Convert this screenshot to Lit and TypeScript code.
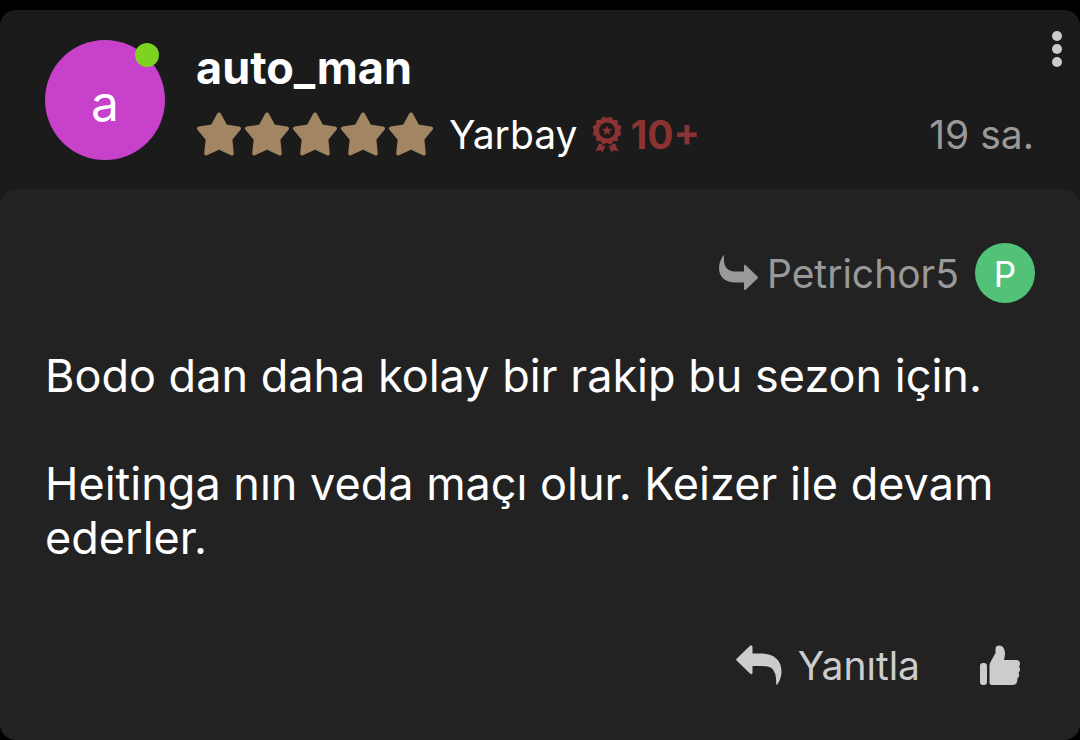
import { LitElement, html, css } from "lit";
import { customElement, property } from "lit/decorators.js";

@customElement("user-avatar")
class UserAvatar extends LitElement {
  @property() letter = "";
  @property({ type: Boolean }) online = false;

  static styles = css`
    :host {
      display: flex;
      position: relative;
      flex: none;
      align-items: center;
      justify-content: center;
      box-sizing: border-box;
      border-radius: 50%;
      color: #fff;
    }
    .dot {
      position: absolute;
      top: 3px;
      right: 6px;
      width: 24px;
      height: 24px;
      border-radius: 50%;
      background: #7ed321;
    }
  `;

  render() {
    return html`<span>${this.letter}</span>${this.online ? html`<span class="dot"></span>` : ""}`;
  }
}

@customElement("app-root")
class AppRoot extends LitElement {
  static styles = css`
    :host {
      display: block;
      box-sizing: border-box;
      min-height: 100vh;
      padding-top: 10px;
      background: #000;
      color: #fff;
      font-family: Inter, "Liberation Sans", sans-serif;
      font-size: 39px;
      line-height: 54px;
    }
    svg {
      display: block;
      flex: none;
      fill: currentColor;
    }
    button {
      padding: 0;
      border: 0;
      background: none;
      color: #ccc;
      font: inherit;
      cursor: pointer;
    }
    a {
      color: inherit;
      text-decoration: none;
    }
    .post {
      border-radius: 16px;
      overflow: hidden;
      background: #1b1b1b;
    }
    .head {
      display: flex;
      padding: 20px 0 27px 45px;
    }
    .big {
      width: 120px;
      height: 120px;
      margin-top: 10px;
      padding-top: 6px;
      background: #c741cb;
      font-size: 50px;
    }
    .who {
      display: flex;
      flex: 1;
      flex-direction: column;
      gap: 11px;
      min-width: 0;
      padding: 11px 0 0 31px;
    }
    .name {
      margin: 0;
      font-size: 45px;
      font-weight: 700;
    }
    .rank,
    .stars,
    .award {
      display: flex;
      align-items: center;
    }
    .rank {
      gap: 15px;
    }
    .stars {
      gap: 2px;
      color: #a38564;
    }
    .award {
      gap: 8px;
      color: #8b3232;
      font-weight: 700;
    }
    .label {
      padding-top: 2px;
    }
    .meta {
      display: flex;
      flex-direction: column;
      align-items: flex-end;
      justify-content: space-between;
    }
    .menu {
      margin-right: 18px;
    }
    .time {
      padding-right: 46px;
      color: #999;
    }
    .body {
      padding: 54px 45px 45px;
      border-radius: 16px;
      background: #222;
    }
    .target {
      display: flex;
      align-items: center;
      justify-content: flex-end;
      gap: 8px;
      color: #999;
    }
    .small {
      width: 60px;
      height: 60px;
      margin-left: 8px;
      padding-top: 2px;
      background: #52c278;
      font-size: 35px;
    }
    .text {
      margin: 46px 0 70px;
      font-size: 45px;
    }
    .text p {
      margin: 0 0 54px;
    }
    .text p:last-child {
      margin: 0;
    }
    .actions {
      display: flex;
      justify-content: flex-end;
      gap: 60px;
      padding-right: 15px;
    }
    .action {
      display: flex;
      align-items: center;
      gap: 16px;
      height: 60px;
    }
  `;

  private star() {
    return html`<svg width="46" height="44" viewBox="0 0 46 44" aria-hidden="true">
      <path
        d="M23 2.500 29.500 14.500 43 16.500 34.300 27 35.800 41.500 23 35.500 10.200 41.500 11.700 27 3 16.500 16.500 14.500Z"
        stroke="currentColor" stroke-width="4" stroke-linejoin="round" />
    </svg>`;
  }

  private ribbon() {
    return html`<svg width="30" height="37" viewBox="0 0 30 37" aria-hidden="true">
      <path
        fill-rule="evenodd"
        d="M15 2 19 .5 21.5 4 25.5 4 26 8.500 29.500 10.500 28 14.500 29.500 18.500 26 20.500 25.500 25 21.500 25 19 28.500 15 27 11 28.500 8.500 25 4.500 25 4 20.500 .5 18.500 2 14.500 .5 10.500 4 8.500 4.500 4 8.500 4 11 .5ZM15 6.500a8 8 0 1 0 0 16 8 8 0 0 0 0-16Z" />
      <path d="M15 9.500 16.400 12.700 20 13 17.300 15.400 18.100 19 15 17.100 11.900 19 12.700 15.400 10 13 13.600 12.700Z" />
      <path d="M7 27.500 10 28 11 30.500 13.500 29.500 10.500 36.500 8.500 34 3.500 35.500ZM23 27.500 20 28 19 30.500 16.500 29.500 19.500 36.500 21.500 34 26.500 35.500Z" />
    </svg>`;
  }

  render() {
    return html`
      <article class="post">
        <header class="head">
          <user-avatar class="big" letter="a" online></user-avatar>
          <div class="who">
            <h1 class="name"><a href="#auto_man">auto_man</a></h1>
            <div class="rank">
              <span class="stars">${[1, 2, 3, 4, 5].map(() => this.star())}</span>
              <span class="label">Yarbay</span>
              <span class="award">${this.ribbon()}<span class="label">10+</span></span>
            </div>
          </div>
          <div class="meta">
            <button class="menu" aria-label="Menü">
              <svg width="10" height="38" viewBox="0 0 10 38">
                <circle cx="5" cy="6" r="5" />
                <circle cx="5" cy="19" r="5" />
                <circle cx="5" cy="32" r="5" />
              </svg>
            </button>
            <time class="time">19 sa.</time>
          </div>
        </header>
        <section class="body">
          <div class="target">
            <svg width="40" height="36" viewBox="0 0 40 36" aria-hidden="true">
              <path d="M5 .5C4.500 9 6 16.500 17 16.500H25V11Q25 9 27 10.500L38.500 21.500Q39.500 22.500 38.500 23.500L27 34.500Q25 36 25 34V27.500H17C6 27.500 0 22 0 13 0 8 2 4 4.200 .5Q5 0 5 .5Z" />
            </svg>
            <a class="label" href="#Petrichor5">Petrichor5</a>
            <user-avatar class="small" letter="P"></user-avatar>
          </div>
          <div class="text">
            <p>Bodo dan daha kolay bir rakip bu sezon için.</p>
            <p>Heitinga nın veda maçı olur. Keizer ile devam ederler.</p>
          </div>
          <footer class="actions">
            <button class="action">
              <svg width="46" height="40" viewBox="0 0 46 40" aria-hidden="true">
                <path d="M14 .8Q16.500-1 16.500 2V8.500H24C38 8.500 45.500 15 45.500 27 45.500 32 43.500 36 41.500 39.200Q40.500 40.500 40.200 39 40.500 27 35.500 23 32 21 24 21H16.500V27.500Q16.500 30.500 14 28.600L.8 15.800Q-.3 14.700 .8 13.600Z" />
              </svg>
              <span class="label">Yanıtla</span>
            </button>
            <button class="action" aria-label="Beğen">
              <svg width="40" height="40" viewBox="0 0 40 40">
                <rect y="18" width="7" height="22" rx="3" />
                <path d="M12 40Q9.500 40 9.500 37.500V21Q9.500 18.500 11 16L15.500 8V4C15.500 1.500 17 .5 19 .5 23.500 .5 25 5 25 8.500 25 11 24.300 13 24 15H36C38.500 15 40 16.500 40 18.500Q40 20.500 39 21.500 40 23 40 24.800 40 26.800 38.500 27.800 39.500 29.500 39 31.200 38.500 33 37.200 33.500 37.700 35 37 36.800C36.400 39 35 40 32.500 40Z" />
              </svg>
            </button>
          </footer>
        </section>
      </article>
    `;
  }
}
